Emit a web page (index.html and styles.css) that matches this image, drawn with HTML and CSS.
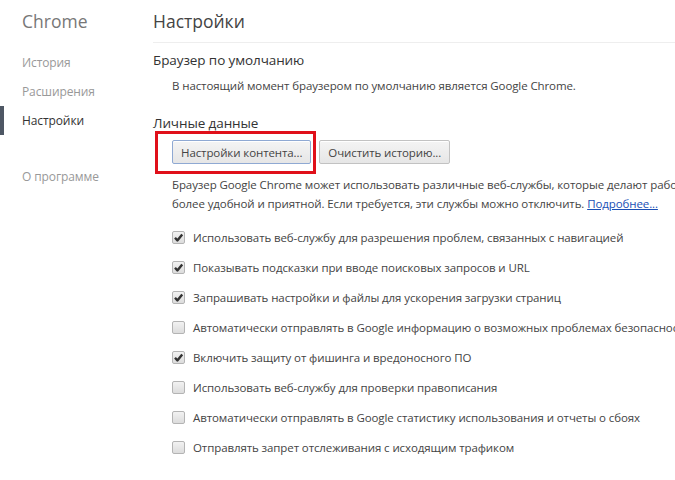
FILE: index.html
```html
<!DOCTYPE html>
<html lang="ru">
<head>
<meta charset="utf-8">
<title>Настройки</title>
<link rel="stylesheet" href="styles.css">
</head>
<body>
<div class="page">
  <nav class="sidebar">
    <div class="brand">Chrome</div>
    <ul class="nav">
      <li class="nav-item">История</li>
      <li class="nav-item">Расширения</li>
      <li class="nav-item active">Настройки</li>
    </ul>
    <ul class="nav nav-extra">
      <li class="nav-item">О программе</li>
    </ul>
  </nav>
  <main class="content">
    <header class="page-header">Настройки</header>

    <section class="section">
      <h3 class="section-title">Браузер по умолчанию</h3>
      <div class="section-body">
        <p class="note">В настоящий момент браузером по умолчанию является Google Chrome.</p>
      </div>
    </section>

    <section class="section section-privacy">
      <h3 class="section-title">Личные данные</h3>
      <div class="section-body">
        <div class="buttons">
          <span class="btn-wrap">
            <button class="btn btn-focused">Настройки контента...</button>
            <span class="highlight"></span>
          </span>
          <button class="btn">Очистить историю...</button>
        </div>
        <p class="desc">Браузер Google Chrome может использовать различные веб-службы, которые делают работу в Интернете<br>более удобной и приятной. Если требуется, эти службы можно отключить. <a class="link" href="#">Подробнее...</a></p>
        <ul class="checks">
          <li class="check-row"><span class="cb checked"><svg viewBox="0 0 13 13" width="13" height="13"><path d="M3 6.8 L5.4 9.4 L10.2 3.4" fill="none" stroke="#333" stroke-width="2.4" stroke-linejoin="round"/></svg></span><span class="label">Использовать веб-службу для разрешения проблем, связанных с навигацией</span></li>
          <li class="check-row"><span class="cb checked"><svg viewBox="0 0 13 13" width="13" height="13"><path d="M3 6.8 L5.4 9.4 L10.2 3.4" fill="none" stroke="#333" stroke-width="2.4" stroke-linejoin="round"/></svg></span><span class="label">Показывать подсказки при вводе поисковых запросов и URL</span></li>
          <li class="check-row"><span class="cb checked"><svg viewBox="0 0 13 13" width="13" height="13"><path d="M3 6.8 L5.4 9.4 L10.2 3.4" fill="none" stroke="#333" stroke-width="2.4" stroke-linejoin="round"/></svg></span><span class="label">Запрашивать настройки и файлы для ускорения загрузки страниц</span></li>
          <li class="check-row"><span class="cb"></span><span class="label">Автоматически отправлять в Google информацию о возможных проблемах безопасности</span></li>
          <li class="check-row"><span class="cb checked"><svg viewBox="0 0 13 13" width="13" height="13"><path d="M3 6.8 L5.4 9.4 L10.2 3.4" fill="none" stroke="#333" stroke-width="2.4" stroke-linejoin="round"/></svg></span><span class="label">Включить защиту от фишинга и вредоносного ПО</span></li>
          <li class="check-row"><span class="cb"></span><span class="label">Использовать веб-службу для проверки правописания</span></li>
          <li class="check-row"><span class="cb"></span><span class="label">Автоматически отправлять в Google статистику использования и отчеты о сбоях</span></li>
          <li class="check-row"><span class="cb"></span><span class="label">Отправлять запрет отслеживания с исходящим трафиком</span></li>
        </ul>
      </div>
    </section>
  </main>
</div>
</body>
</html>
```

FILE: styles.css
```css
html, body {
  margin: 0;
  padding: 0;
  background: #fff;
  overflow: hidden;
}
body {
  font-family: "Open Sans", "Noto Sans", sans-serif;
  font-size: 11.5px;
  letter-spacing: -0.1px;
  color: #333;
  width: 675px;
  height: 480px;
}
.page {
  display: flex;
  width: 675px;
  height: 480px;
  overflow: hidden;
}
.sidebar {
  flex: 0 0 153px;
}
.brand {
  height: 42px;
  line-height: 42px;
  padding-left: 22px;
  font-size: 17.5px;
  letter-spacing: 0;
  color: #777;
}
.nav {
  list-style: none;
  margin: 6px 0 0;
  padding: 0;
}
.nav-extra {
  margin-top: 27px;
}
.nav-item {
  height: 29px;
  line-height: 29px;
  padding-left: 18px;
  font-size: 12px;
  color: #999;
  border-left: 4px solid transparent;
}
.nav-item.active {
  color: #333;
  border-left-color: #4e5764;
}
.content {
  flex: 1 1 auto;
  min-width: 0;
  white-space: nowrap;
}
.page-header {
  height: 42px;
  line-height: 42px;
  font-size: 17.5px;
  letter-spacing: 0;
  color: #444;
  border-bottom: 1px solid #eee;
}
.section-title {
  margin: 0;
  font-size: 13.5px;
  font-weight: normal;
  line-height: 20px;
  color: #333;
}
.section {
  padding-top: 7px;
}
.section-privacy {
  padding-top: 18px;
}
.section-body {
  padding-left: 19px;
}
.note {
  margin: 7px 0 0;
  line-height: 18px;
  color: #444;
}
.buttons {
  display: flex;
  gap: 8px;
  margin-top: 7px;
}
.btn-wrap {
  position: relative;
  display: inline-flex;
}
.btn {
  font-family: inherit;
  font-size: 11.5px;
  letter-spacing: -0.1px;
  color: #444;
  height: 24px;
  padding: 0 8px;
  border: 1px solid #c2c2c2;
  border-radius: 2px;
  background: linear-gradient(#f4f4f4, #e6e6e6);
  box-shadow: inset 0 1px 0 #fff;
}
.btn-focused {
  border-color: #8fa9d3;
  padding: 0 8px;
}
.highlight {
  position: absolute;
  left: -17px;
  top: -9px;
  right: -5px;
  bottom: -10px;
  border: 3px solid #e0101a;
  pointer-events: none;
}
.desc {
  margin: 11px 0 0;
  line-height: 19px;
  color: #444;
}
.link {
  color: #1a4fb5;
  text-decoration: underline;
}
.checks {
  list-style: none;
  margin: 9px 0 0;
  padding: 0;
}
.check-row {
  display: flex;
  align-items: center;
  height: 30px;
}
.cb {
  flex: 0 0 auto;
  width: 11px;
  height: 11px;
  border: 1px solid #b4b4b4;
  border-radius: 2px;
  background: linear-gradient(#f2f2f2, #dcdcdc);
  margin-right: 8px;
  position: relative;
}
.cb svg {
  position: absolute;
  left: -1px;
  top: -1px;
}
.label {
  color: #444;
}
```
